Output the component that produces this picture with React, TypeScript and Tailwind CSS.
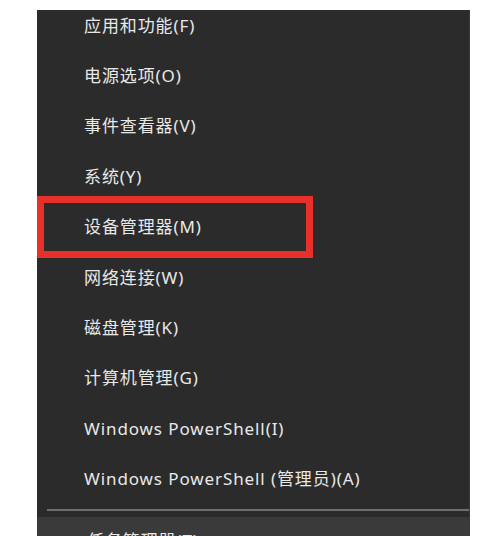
const items = [
  "应用和功能(F)",
  "电源选项(O)",
  "事件查看器(V)",
  "系统(Y)",
  "设备管理器(M)",
  "网络连接(W)",
  "磁盘管理(K)",
  "计算机管理(G)",
  "Windows PowerShell(I)",
  "Windows PowerShell (管理员)(A)",
];

export default function App() {
  return (
    <div
      className="w-[500px] h-[536px] bg-white overflow-hidden pt-[10px]"
      style={{ fontFamily: '"Noto Sans", "Noto Sans CJK SC", sans-serif' }}
    >
      <div className="ml-[37px] w-[433px] h-[526px] bg-[#2b2b2b] overflow-hidden border-r border-[#3a3a3a]">
        <ul className="-mt-[10px] list-none m-0 p-0">
          {items.map((label) => {
            const active = label === "设备管理器(M)";
            return (
              <li key={label} className="h-[50.4px] flex items-center">
                {active ? (
                  <div className="w-[276px] h-[62px] border-[7px] border-[#e8302a] flex items-center pl-[40px]">
                    <span className="text-[17px] tracking-[0.9px] text-[#e8e8e8] leading-none">{label}</span>
                  </div>
                ) : (
                  <span className="pl-[47px] text-[17px] tracking-[0.9px] text-[#e8e8e8] leading-none">{label}</span>
                )}
              </li>
            );
          })}
        </ul>
        <div className="h-[13px] flex items-center pl-[10px]">
          <div className="h-[2px] w-full bg-[#6e6e6e]" />
        </div>
        <div className="bg-[#3a3a3a] h-[40px] pl-[50px] pt-[12px]">
          <span className="text-[17px] tracking-[0.9px] text-[#e8e8e8] leading-none">任务管理器(T)</span>
        </div>
      </div>
    </div>
  );
}
